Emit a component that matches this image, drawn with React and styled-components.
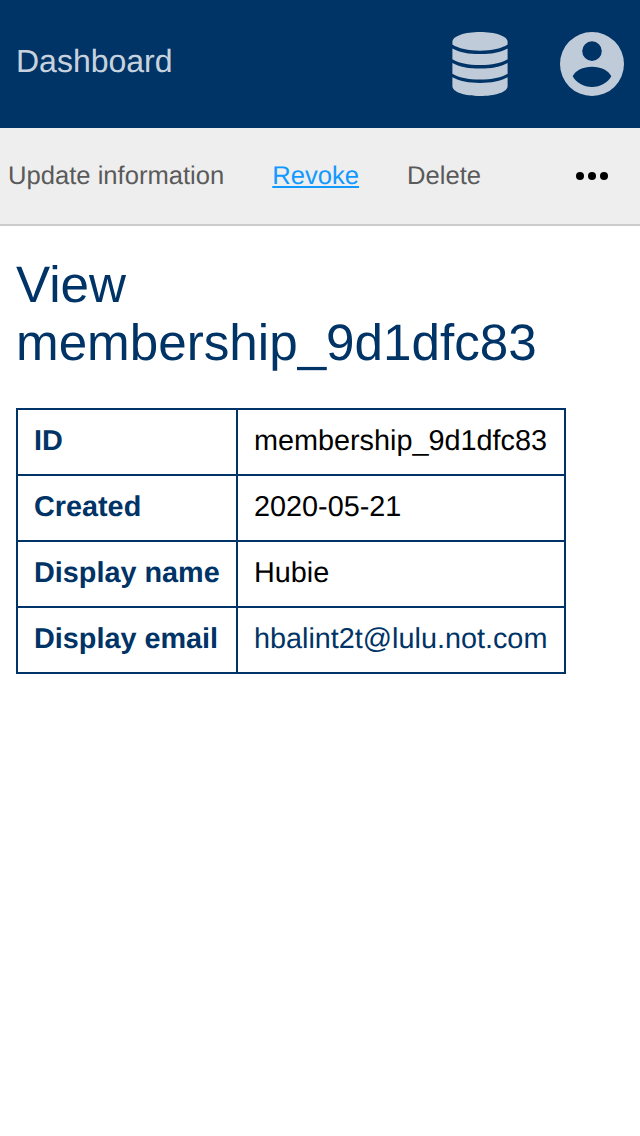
import React from "react";
import styled, { createGlobalStyle } from "styled-components";

const GlobalStyle = createGlobalStyle`
  * { box-sizing: border-box; }
  body {
    margin: 0;
    background: #fff;
    color: #000;
    font-family: "Liberation Sans", Arial, sans-serif;
    text-rendering: geometricPrecision;
  }
`;

const TopBar = styled.header`
  display: flex;
  align-items: center;
  height: 128px;
  padding: 0 16px;
  background: #003366;
  color: rgba(255, 255, 255, 0.75);
`;

const Brand = styled.a`
  flex: 1;
  padding-bottom: 6px;
  font-size: 32px;
  line-height: 36px;
  color: rgba(255, 255, 255, 0.8);
`;

const IconGroup = styled.div`
  display: flex;
  align-items: center;
  gap: 52px;
`;

const Icon = styled.svg`
  display: block;
  width: ${(p) => p.$width}px;
  height: 64px;
  fill: currentColor;
`;

const ActionBar = styled.nav`
  display: flex;
  align-items: center;
  height: 98px;
  padding: 0 32px 0 8px;
  background: #eee;
  border-bottom: 2px solid #ccc;
`;

const Action = styled.a`
  margin-right: 48px;
  font-size: 25.6px;
  line-height: 30px;
  white-space: nowrap;
  color: ${(p) => (p.$active ? "#1199ff" : "#5a5a5a")};
  text-decoration: ${(p) => (p.$active ? "underline 2px" : "none")};
  text-decoration-skip-ink: none;
  text-underline-offset: 2px;
`;

const MoreButton = styled.button`
  display: flex;
  gap: 4px;
  margin-left: auto;
  padding: 0;
  border: 0;
  background: none;
`;

const Dot = styled.span`
  width: 8px;
  height: 8px;
  border-radius: 50%;
  background: #000;
`;

const Content = styled.main`
  padding: 30px 16px;
`;

const Title = styled.h1`
  margin: 0 0 36px;
  font-size: 51.2px;
  font-weight: 400;
  line-height: 58px;
  color: #003366;
`;

const Details = styled.table`
  width: 550px;
  border-collapse: collapse;
  font-size: 28.8px;
  line-height: 32px;
`;

const Label = styled.th`
  width: 220px;
  height: 66px;
  padding: 0 16px 2px;
  border: 2px solid #003366;
  text-align: left;
  white-space: nowrap;
  color: #003366;
`;

const Value = styled.td`
  padding: 0 16px 2px;
  border: 2px solid #003366;
`;

const MailLink = styled.a`
  color: #003366;
`;

const rows = [
  ["ID", "membership_9d1dfc83"],
  ["Created", "2020-05-21"],
  ["Display name", "Hubie"],
  ["Display email", <MailLink key="mail">hbalint2t@lulu.not.com</MailLink>],
];

function DatabaseIcon() {
  return (
    <Icon $width={56} viewBox="0 0 56 64">
      <path d="M.4 9.8C.4 4 13 0 28 0s27.600 4 27.600 9.800v2.800C50 16.500 39.500 18.800 28 18.800S6 16.500.4 12.600z" />
      <path d="M.4 16.400C7 20.300 17 22.100 28 22.100s21-1.800 27.600-5.700v10.900C50 31 39.500 33.100 28 33.100S6 31 .4 27.300z" />
      <path d="M.4 30.900C7 34.800 17 36.600 28 36.600s21-1.800 27.600-5.700v10.800C50 45.400 39.500 47.500 28 47.500S6 45.400.4 41.700z" />
      <path d="M.4 45.200C7 49.100 17 50.900 28 50.900s21-1.800 27.600-5.700v9C55.600 60 43 64 28 64S.4 60 .4 54.200z" />
    </Icon>
  );
}

function AccountIcon() {
  return (
    <Icon $width={64} viewBox="0 0 64 64">
      <path
        fillRule="evenodd"
        d="M32 0a32 32 0 1 0 0 64a32 32 0 1 0 0-64zM32 9.300a9.800 9.800 0 1 1 0 19.600a9.800 9.800 0 1 1 0-19.600zM12.700 44.300C15.500 38.500 23 34.800 32 34.800s16.500 3.700 19.300 9.500C47.500 51 40.500 55 32 55s-15.500-4-19.300-10.700z"
      />
    </Icon>
  );
}

export default function App() {
  return (
    <>
      <GlobalStyle />
      <TopBar>
        <Brand>Dashboard</Brand>
        <IconGroup>
          <DatabaseIcon />
          <AccountIcon />
        </IconGroup>
      </TopBar>
      <ActionBar>
        <Action>Update information</Action>
        <Action $active>Revoke</Action>
        <Action>Delete</Action>
        <MoreButton aria-label="More">
          <Dot />
          <Dot />
          <Dot />
        </MoreButton>
      </ActionBar>
      <Content>
        <Title>View membership_9d1dfc83</Title>
        <Details>
          <tbody>
            {rows.map(([label, value]) => (
              <tr key={label}>
                <Label>{label}</Label>
                <Value>{value}</Value>
              </tr>
            ))}
          </tbody>
        </Details>
      </Content>
    </>
  );
}
